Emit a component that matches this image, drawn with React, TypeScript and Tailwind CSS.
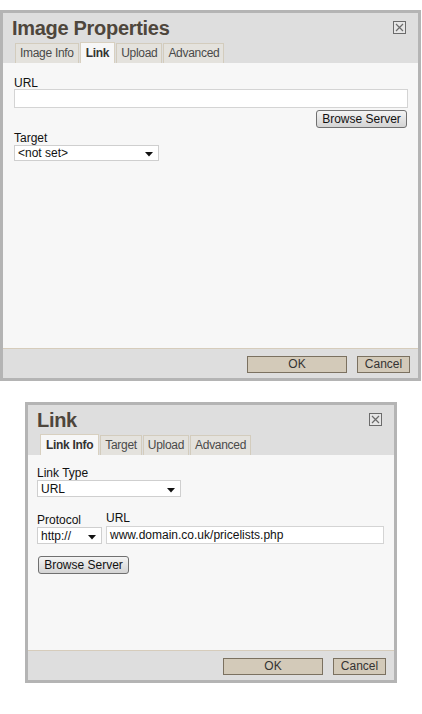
import React from 'react';

const font = { fontFamily: '"Liberation Sans", Arial, sans-serif' };

function CloseBox() {
  return (
    <svg width="13" height="13" viewBox="0 0 13 13" className="block">
      <rect x="0.5" y="0.5" width="12" height="12" fill="#e6e6e6" stroke="#6b6b6b" />
      <path d="M3 3 L10 10 M10 3 L3 10" stroke="#6b6b6b" strokeWidth="1.2" />
    </svg>
  );
}

function Arrow() {
  return (
    <svg width="8" height="5" viewBox="0 0 8 5" className="block">
      <path d="M0 0 H8 L4 4.5 Z" fill="#111" />
    </svg>
  );
}

function Select({ value, className }: { value: string; className: string }) {
  return (
    <div
      className={`flex items-center justify-between border border-[#cfcfcf] bg-white pl-[3px] pr-[5px] text-[12px] leading-none text-[#111] ${className}`}
    >
      <span>{value}</span>
      <span className="mt-[3px]">
        <Arrow />
      </span>
    </div>
  );
}

function Tabs({ tabs, active }: { tabs: string[]; active: string }) {
  return (
    <div className="flex items-end gap-[1px] pl-[12px] tracking-[-0.3px]">
      {tabs.map((t) =>
        t === active ? (
          <div
            key={t}
            className="h-[21px] border border-b-0 border-[#d8d0c0] bg-[#f7f7f7] px-[5px] pt-[3px] text-[12px] font-bold leading-[15px] text-[#333]"
          >
            {t}
          </div>
        ) : (
          <div
            key={t}
            className="h-[20px] border border-b-0 border-[#d3ccbd] bg-[#e4e2dd] px-[4px] pt-[2px] text-[12px] leading-[15px] text-[#4a4a4a]"
          >
            {t}
          </div>
        )
      )}
    </div>
  );
}

function BrowseButton() {
  return (
    <div className="flex h-[18px] w-[91px] items-center justify-center rounded-[3px] border border-[#707070] bg-gradient-to-b from-[#f4f4f4] to-[#d4d4d4] text-[12px] leading-none text-[#111]">
      Browse Server
    </div>
  );
}

function Footer() {
  return (
    <div className="flex h-[30px] items-center justify-end gap-[10px] border-t border-[#d6ccbb] bg-[#dedede] pr-[8px] pt-[1px]">
      <div className="flex h-[17px] w-[100px] items-center justify-center border border-[#7b7160] bg-[#d3cab9] text-[12px] leading-none text-[#333]">
        OK
      </div>
      <div className="flex h-[17px] w-[53px] items-center justify-center border border-[#7b7160] bg-[#d3cab9] text-[12px] leading-none text-[#333]">
        Cancel
      </div>
    </div>
  );
}

function Dialog({
  title,
  tabs,
  active,
  className,
  children,
}: {
  title: string;
  tabs: string[];
  active: string;
  className: string;
  children: React.ReactNode;
}) {
  return (
    <div className={`flex flex-col border-[3px] border-[#b4b4b4] ${className}`}>
      <div className="bg-[#dedede]">
        <div className="flex items-start justify-between pl-[9px] pr-[12px]">
          <div className="pt-[3px] text-[20px] font-bold leading-[24px] tracking-[-0.3px] text-[#4e463c]">
            {title}
          </div>
          <div className="mt-[8px]">
            <CloseBox />
          </div>
        </div>
        <div className="mt-[2px]">
          <Tabs tabs={tabs} active={active} />
        </div>
      </div>
      <div className="flex-1 bg-[#f7f7f7]">{children}</div>
      <Footer />
    </div>
  );
}

export default function App() {
  return (
    <div className="min-h-screen bg-white pt-[10px]" style={font}>
      <Dialog
        title="Image Properties"
        tabs={['Image Info', 'Link', 'Upload', 'Advanced']}
        active="Link"
        className="h-[371px] w-[421px]"
      >
        <div className="flex flex-col pl-[11px] pr-[10px] pt-[14px] text-[12px] text-[#111]">
          <div className="leading-[12px]">URL</div>
          <div className="h-[19px] border border-[#d4d4d4] bg-white" />
          <div className="mt-[2px] flex justify-end pr-[1px]">
            <BrowseButton />
          </div>
          <div className="mt-[4px] leading-[12px]">Target</div>
          <Select value="<not set>" className="mt-[1px] h-[16px] w-[145px]" />
        </div>
      </Dialog>

      <Dialog
        title="Link"
        tabs={['Link Info', 'Target', 'Upload', 'Advanced']}
        active="Link Info"
        className="ml-[25px] mt-[21px] h-[281px] w-[372px]"
      >
        <div className="flex flex-col pl-[9px] pr-[10px] pt-[12px] text-[12px] text-[#111]">
          <div className="leading-[12px]">Link Type</div>
          <Select value="URL" className="mt-[1px] h-[17px] w-[144px]" />
          <div className="mt-[15px] flex gap-[4px]">
            <div className="flex flex-col">
              <div className="pt-[2px] leading-[12px]">Protocol</div>
              <Select value="http://" className="mt-[1px] h-[17px] w-[65px]" />
            </div>
            <div className="flex flex-1 flex-col">
              <div className="leading-[12px]">URL</div>
              <div className="mt-[2px] flex h-[18px] items-center border border-[#d4d4d4] bg-white pl-[3px] leading-none">
                www.domain.co.uk/pricelists.php
              </div>
            </div>
          </div>
          <div className="mt-[12px] pl-[1px]">
            <BrowseButton />
          </div>
        </div>
      </Dialog>
    </div>
  );
}
